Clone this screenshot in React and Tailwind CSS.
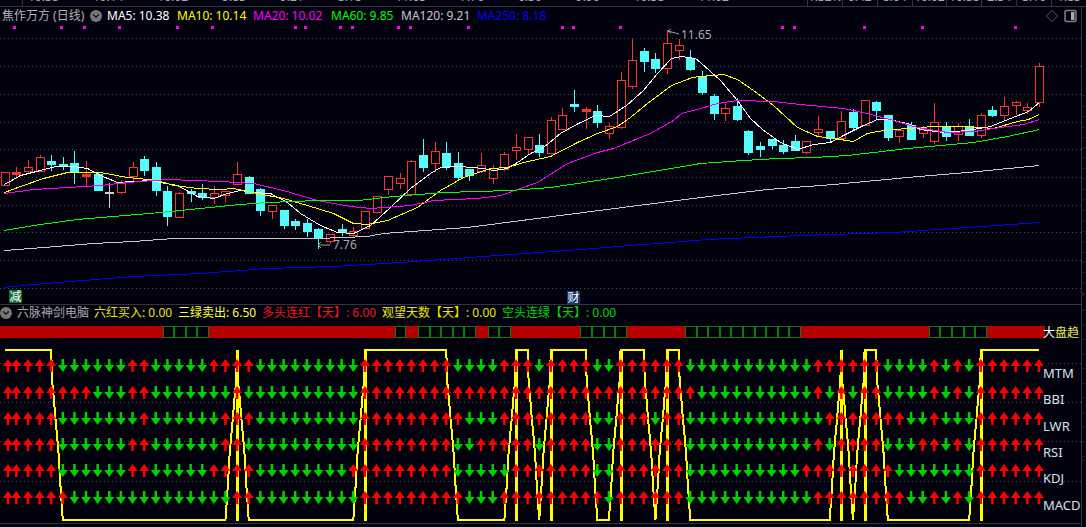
import { ChevronDown } from 'lucide-react';

const BG = '#02020e';
const RED = '#ff3232';
const CYAN = '#54fcfc';

// type, body top, body bottom, high, low (page pixels)
const candles = [
  ['r', 172, 185, 172, 185], ['R', 172, 174, 167, 178], ['r', 167, 171, 160, 173], ['r', 157, 171, 155, 171],
  ['c', 161, 164, 155, 170], ['c', 164, 165, 157, 169], ['c', 163, 172, 151, 183], ['R', 174, 176, 161, 185],
  ['c', 174, 190, 172, 190], ['w', 192, 193, 183, 207], ['r', 183, 192, 180, 193], ['r', 167, 176, 162, 180],
  ['c', 159, 170, 156, 175], ['c', 167, 190, 162, 195], ['c', 191, 216, 186, 225], ['r', 193, 217, 192, 217],
  ['c', 191, 193, 189, 201], ['c', 193, 197, 184, 199], ['r', 193, 197, 186, 203], ['r', 191, 195, 191, 201],
  ['r', 174, 184, 162, 184], ['c', 177, 193, 176, 193], ['c', 189, 210, 188, 215], ['r', 205, 211, 205, 218],
  ['c', 210, 225, 210, 228], ['c', 221, 225, 219, 229], ['c', 223, 231, 219, 236], ['c', 229, 238, 228, 248],
  ['r', 234, 241, 234, 243], ['c', 229, 232, 224, 235], ['r', 231, 235, 227, 236], ['r', 211, 228, 211, 228],
  ['r', 196, 212, 196, 212], ['r', 176, 189, 176, 194], ['r', 178, 183, 173, 188], ['r', 161, 194, 160, 194],
  ['c', 155, 167, 139, 171], ['r', 151, 163, 142, 171], ['c', 153, 166, 142, 169], ['c', 163, 177, 152, 179],
  ['c', 169, 175, 169, 180], ['r', 165, 171, 153, 172], ['r', 168, 178, 165, 183], ['r', 154, 169, 152, 170],
  ['r', 147, 150, 134, 159], ['r', 137, 149, 137, 153], ['c', 145, 152, 134, 156], ['r', 120, 153, 117, 153],
  ['r', 115, 129, 108, 129], ['c', 104, 106, 90, 111], ['R', 109, 111, 107, 128], ['c', 111, 122, 105, 127],
  ['r', 126, 133, 123, 138], ['r', 80, 127, 72, 128], ['r', 60, 86, 39, 88], ['c', 51, 61, 48, 71],
  ['c', 59, 68, 53, 72], ['r', 43, 68, 30, 73], ['r', 45, 50, 39, 59], ['c', 58, 69, 50, 70],
  ['c', 76, 92, 71, 94], ['c', 96, 113, 94, 119], ['r', 108, 113, 104, 120], ['c', 106, 119, 98, 120],
  ['c', 131, 152, 130, 154], ['c', 146, 149, 142, 156], ['c', 139, 145, 139, 148], ['c', 145, 151, 140, 153],
  ['c', 141, 150, 135, 150], ['r', 141, 152, 141, 153], ['r', 129, 132, 116, 135], ['c', 131, 138, 131, 141],
  ['r', 121, 138, 111, 138], ['c', 112, 127, 109, 129], ['r', 100, 125, 100, 125], ['c', 102, 110, 101, 118],
  ['c', 115, 137, 115, 140], ['r', 130, 136, 130, 142], ['c', 125, 139, 122, 139], ['r', 129, 133, 126, 137],
  ['r', 122, 141, 103, 143], ['c', 126, 136, 122, 140], ['r', 126, 134, 123, 140], ['c', 127, 135, 119, 135],
  ['r', 115, 135, 113, 137], ['c', 110, 115, 106, 116], ['r', 106, 115, 97, 119], ['r', 102, 105, 101, 114],
  ['r', 107, 110, 103, 113], ['r', 66, 102, 63, 106],
];

const maLines = [
  ['#ffffff', '4,184 20,175 40,170 55,166 73,166 87,168 100,175 117,182 133,181 150,180 160,182 177,185 197,196 213,198 227,193 240,190 253,192 270,193 287,202 300,213 320,225 337,232 353,233 370,225 390,207 410,188 430,173 440,167 460,166 483,168 493,170 507,168 520,160 530,153 543,147 560,133 578,123 595,115 609,116 626,105 643,90 657,73 671,58 681,56 695,58 700,62 720,80 737,100 750,118 762,129 780,142 797,149 813,144 830,142 843,135 863,125 877,119 888,119 907,123 920,129 943,132 967,130 990,126 1010,118 1028,111 1039,102'],
  ['#ffff00', '4,192 20,186 43,178 67,172 100,172 127,177 157,180 173,185 197,188 220,189 233,188 257,193 283,198 307,205 333,213 353,223 367,224 387,220 417,207 440,190 463,177 490,168 507,167 523,162 550,156 577,142 597,133 617,126 630,117 647,103 671,85 692,77 700,76 723,74 737,79 753,90 773,105 797,127 817,136 833,138 853,141 867,133 883,130 907,128 933,126 967,126 993,128 1017,121 1028,119 1039,114'],
  ['#ff00ff', '4,193 33,189 67,187 100,185 127,182 167,179 220,181 253,183 283,190 317,200 350,206 370,208 410,205 433,200 477,198 500,195 537,182 567,163 597,152 613,148 650,133 673,120 681,113 700,108 717,103 737,100 773,101 800,104 843,108 867,113 893,120 917,127 947,132 973,131 1000,127 1023,124 1039,119'],
  ['#00ff00', '4,230 33,225 77,219 113,216 160,212 200,208 240,204 267,202 317,200 358,200 393,196 443,192 510,190 550,187 617,177 700,163 743,160 777,158 813,157 847,155 873,152 907,148 940,145 973,142 1007,136 1039,129'],
  ['#c8c8c8', '4,250 43,247 93,243 133,241 173,238 317,238 367,236 383,233 467,227 583,212 700,197 767,189 833,184 907,177 967,172 1039,165'],
  ['#0000ff', '4,287 33,284 83,280 133,276 200,273 267,268 333,266 400,262 580,249 617,246 683,241 707,239 800,235 893,232 967,227 1039,222'],
];

const dots = [14, 61, 84, 119, 177, 212, 295, 305, 340, 352, 398, 410, 468, 562, 573, 620, 782, 794, 864, 922, 1015];
const mainGrid = [38, 66, 94, 122, 149, 177, 205, 232, 260, 288];
const subGrid = [363, 402, 441, 481];

// each row starts red and flips colour at these columns
const signalRows = [
  [5, 11, 13, 18, 22, 31, 39, 43, 46, 47, 51, 53, 59, 70, 76, 80, 81, 82, 83, 84],
  [8, 11, 13, 20, 21, 31, 60, 70, 71, 72, 73, 74, 76, 80, 81, 82, 83, 84],
  [5, 12, 13, 19, 22, 31, 40, 43, 51, 53, 56, 57, 59, 71, 78, 80, 81, 84],
  [5, 11, 13, 19, 21, 31, 39, 41, 46, 47, 51, 53, 59, 70, 71, 72, 76, 79, 81, 82, 83, 84],
  [5, 11, 13, 18, 22, 30, 39, 44, 51, 53, 59, 69, 77, 84],
  [6, 20, 22, 31, 40, 43, 52, 53, 59, 70, 78, 80, 81, 82, 83, 84],
];
const rowTops = [359, 386, 412, 438, 464, 491];

const highRanges = [[0, 4], [20, 20], [31, 38], [44, 45], [47, 50], [53, 55], [57, 58], [72, 72], [74, 75], [84, 89]];
const spikes = [20, 31, 44, 47, 53, 57, 72, 74, 84];
const greenCells = [[14, 17], [34, 34], [36, 40], [42, 43], [50, 53], [59, 68], [80, 84]];

const colX = (i) => 4.7 + 11.62 * i;
const isHigh = (i) => highRanges.some(([a, b]) => i >= a && i <= b);
const isGreenCell = (i) => greenCells.some(([a, b]) => i >= a && i <= b);

const stairX = [0, 0.09, 0.22, 0.36, 0.5, 0.65, 0.78, 0.91, 1];
const stairY = [0, 0.19, 0.28, 0.4, 0.5, 0.62, 0.78, 0.91, 1];

function signalPoints() {
  const top = 350;
  const bottom = 520;
  const pts = [`${colX(0)},${top}`];
  for (let i = 1; i < 90; i++) {
    const a = isHigh(i - 1);
    const b = isHigh(i);
    if (a === b) {
      pts.push(`${colX(i)},${b ? top : bottom}`);
    } else if (a) {
      stairX.forEach((f, k) => pts.push(`${colX(i - 1) + f * 11.62},${top + stairY[k] * (bottom - top)}`));
    } else {
      for (let k = 8; k >= 0; k--) {
        pts.push(`${colX(i) - stairX[k] * 11.62},${top + stairY[k] * (bottom - top)}`);
      }
    }
  }
  return pts.join(' ');
}

function Candle({ c, i }) {
  const [type, top, bottom, high, low] = c;
  const x = Math.round(colX(i));
  const color = type === 'c' ? CYAN : type === 'w' ? '#d0d0d0' : RED;
  return (
    <g shapeRendering="crispEdges">
      <rect x={x} y={high} width="1" height={low - high + 1} fill={color} />
      {type === 'r' ? (
        <rect x={x - 3.5} y={top + 0.5} width="8" height={bottom - top} fill={BG} stroke={color} />
      ) : (
        <rect x={x - 4} y={top} width="9" height={bottom - top + 1} fill={color} />
      )}
    </g>
  );
}

function MainChart() {
  return (
    <svg width="1082" height="279" viewBox="0 25 1082 279" className="block">
      {mainGrid.map((y) => (
        <line key={y} x1="0" x2="1082" y1={y + 0.5} y2={y + 0.5} stroke="#44444c" strokeDasharray="1 3" />
      ))}
      {dots.map((x) => (
        <rect key={x} x={x - 1} y="26" width="3" height="3" fill="#ff00ff" />
      ))}
      {candles.map((c, i) => (
        <Candle key={i} c={c} i={i} />
      ))}
      <g transform="translate(0.5 0.5)">
        {maLines.map(([color, pts]) => (
          <polyline key={color} points={pts} fill="none" stroke={color} strokeWidth="1" shapeRendering="crispEdges" />
        ))}
      </g>
      <path d="M668 31 L671 29 M668 31 L671 33 M668 31 L679 34" fill="none" stroke="#a0a0a0" />
      <path d="M318 245 L321 242 M318 245 L321 248 M318 245 L330 245" fill="none" stroke="#a0a0a0" />
    </svg>
  );
}

function Arrow({ x, y, up }) {
  if (up) {
    return (
      <polygon
        points={`${x},${y} ${x + 5},${y + 7} ${x + 1.25},${y + 7} ${x + 1.25},${y + 13} ${x - 1.25},${y + 13} ${x - 1.25},${y + 7} ${x - 5},${y + 7}`}
        fill="#ff0000"
      />
    );
  }
  return (
    <polygon
      points={`${x - 1.25},${y} ${x + 1.25},${y} ${x + 1.25},${y + 6} ${x + 5},${y + 6} ${x},${y + 13} ${x - 5},${y + 6} ${x - 1.25},${y + 6}`}
      fill="#00d000"
    />
  );
}

function SignalChart() {
  return (
    <svg width="1043" height="186" viewBox="0 338 1043 186" className="block shrink-0 overflow-visible">
      {subGrid.map((y) => (
        <line key={y} x1="0" x2="1082" y1={y + 0.5} y2={y + 0.5} stroke="#44444c" strokeDasharray="1 3" />
      ))}
      <polyline points={signalPoints()} fill="none" stroke="#ffff00" strokeWidth="2" shapeRendering="crispEdges" />
      {spikes.map((i) => (
        <rect key={i} x={Math.round(colX(i)) - 1} y="350" width="3" height="171" fill="#ffff00" />
      ))}
      {signalRows.map((flips, r) =>
        Array.from({ length: 90 }, (_, i) => {
          const up = flips.filter((f) => f <= i).length % 2 === 0;
          return <Arrow key={`${r}-${i}`} x={i === 0 ? 8 : colX(i)} y={rowTops[r]} up={up} />;
        }),
      )}
    </svg>
  );
}

function TopStrip() {
  const leftItems = ['10.38', '10.14', '10.02', '9.85', '9.21', '8.18', '11.65', '7.76', '6.50', '9.96', '10.58', '11.02'];
  const cells = ['1.32%', '0.42', '8.64', '10.02', '10.58', '2.34', '3.16', '1.85'];
  return (
    <div className="flex h-[7px] overflow-hidden border-b border-[#333338] text-[12px] leading-[12px] text-[#a8a8a8]">
      <div className="w-[23px] shrink-0 border-r border-[#333338]" />
      <div className="flex flex-1 gap-[34px] pl-[5px]">
        {leftItems.map((t, i) => (
          <span key={i} className="-mt-[9px]">{t}</span>
        ))}
      </div>
      <div className="flex shrink-0">
        {cells.map((t, i) => (
          <div key={i} className="w-[34.9px] border-l border-[#333338] text-center">
            <span className="-mt-[9px] block">{t}</span>
          </div>
        ))}
      </div>
    </div>
  );
}

function MainHeader() {
  return (
    <div className="flex h-[18px] items-center whitespace-nowrap pl-[2px] pr-[4px] text-[12px] leading-[18px]">
      <span className="w-[88px] shrink-0 text-[#b4b4b4]">焦作万方 (日线)</span>
      <span className="flex h-3 w-3 shrink-0 items-center justify-center rounded-full bg-[#777777]">
        <ChevronDown size={10} strokeWidth={3} color="#1a1a1a" />
      </span>
      <span className="ml-[5px] w-[70px] shrink-0 text-white">MA5: 10.38</span>
      <span className="w-[76px] shrink-0 text-[#ffff00]">MA10: 10.14</span>
      <span className="w-[78px] shrink-0 text-[#ff00ff]">MA20: 10.02</span>
      <span className="w-[70px] shrink-0 text-[#00ff00]">MA60: 9.85</span>
      <span className="w-[76px] shrink-0 text-[#c8c8c8]">MA120: 9.21</span>
      <span className="shrink-0 text-[#0000ff]">MA250: 8.18</span>
      <svg width="32" height="14" viewBox="0 0 32 14" className="ml-auto shrink-0">
        <path d="M7 1.5 L12.5 7 L7 12.5 L1.5 7 Z" fill="none" stroke="#555558" />
        <rect x="20" y="1.5" width="11" height="11" rx="2" fill="none" stroke="#808080" strokeWidth="1.5" />
        <rect x="26" y="3" width="3.5" height="8" fill="#a8a8a8" />
      </svg>
    </div>
  );
}

function SubHeader() {
  return (
    <div className="mb-[5px] flex h-[16px] items-center gap-[5px] whitespace-nowrap text-[12px] leading-[16px]">
      <span className="flex h-3 w-3 shrink-0 items-center justify-center rounded-full bg-[#777777]">
        <ChevronDown size={10} strokeWidth={3} color="#1a1a1a" />
      </span>
      <span className="w-[72px] shrink-0 text-[#a8a8a8]">六脉神剑电脑</span>
      <span className="w-[79px] shrink-0 text-[#e6e600]">六红买入: 0.00</span>
      <span className="w-[79px] shrink-0 text-[#ffff40]">三绿卖出: 6.50</span>
      <span className="w-[115px] shrink-0 text-[#f01818]">多头连红【天】: 6.00</span>
      <span className="w-[115px] shrink-0 text-[#e6e600]">观望天数【天】: 0.00</span>
      <span className="shrink-0 text-[#00d800]">空头连绿【天】: 0.00</span>
    </div>
  );
}

function TrendBar() {
  return (
    <div className="flex h-[12px] items-stretch">
      <div className="flex w-[1043px] shrink-0 overflow-visible">
        {Array.from({ length: 90 }, (_, i) => (
          <div
            key={i}
            className={
              isGreenCell(i)
                ? 'w-[11.62px] shrink-0 border border-[#0b7d0b] bg-[#02020e]'
                : 'w-[11.62px] shrink-0 bg-[#b80000]'
            }
          />
        ))}
      </div>
      <span className="relative whitespace-nowrap text-[12px] leading-[14px]">
        <span className="text-white">大</span>
        <span className="text-[#e8e860]">盘趋</span>
      </span>
    </div>
  );
}

function SignalLabels() {
  return (
    <div className="flex flex-col pt-[22px] text-[13px] leading-[14px] text-[#d8e0ec]">
      {['MTM', 'BBI', 'LWR', 'RSI', 'KDJ', 'MACD'].map((t) => (
        <span key={t} className="flex h-[26.3px] items-center">{t}</span>
      ))}
    </div>
  );
}

function AxisTicks() {
  const ticks = [];
  for (let y = 38; y < 304; y += 13.9) ticks.push(y);
  for (let y = 324; y < 524; y += 19.5) ticks.push(y);
  return (
    <svg width="4" height="520" viewBox="0 7 4 520" className="block shrink-0 border-l border-[#333338]">
      {ticks.map((y) => (
        <line key={y} x1="0" x2="4" y1={Math.round(y) + 0.5} y2={Math.round(y) + 0.5} stroke="#333338" />
      ))}
      <line x1="0" x2="4" y1="304.5" y2="304.5" stroke="#333338" />
      <line x1="0" x2="4" y1="524.5" y2="524.5" stroke="#333338" />
    </svg>
  );
}

export default function App() {
  return (
    <div className="h-[527px] w-[1086px] overflow-hidden bg-[#02020e] font-['Noto_Sans','Noto_Sans_CJK_SC',sans-serif]">
      <TopStrip />
      <div className="flex">
        <div className="relative w-[1081px] shrink-0">
          <MainHeader />
          <MainChart />
          <div className="h-[1px] bg-[#333338]" />
          <SubHeader />
          <TrendBar />
          <div className="flex h-[186px] border-b border-[#333338]">
            <SignalChart />
            <SignalLabels />
          </div>
          <span className="absolute left-[681px] top-[20px] text-[12px] leading-[16px] text-[#a8a8a8]">11.65</span>
          <span className="absolute left-[333px] top-[230px] text-[12px] leading-[16px] text-[#a8a8a8]">7.76</span>
          <span className="absolute left-[9px] top-[283px] flex h-[13px] w-[13px] items-center justify-center bg-[#0a6a2a] text-[12px] leading-[13px] text-white">减</span>
          <span className="absolute left-[567px] top-[284px] flex h-[13px] w-[13px] items-center justify-center bg-[#123a6e] text-[12px] leading-[13px] text-white">财</span>
        </div>
        <AxisTicks />
      </div>
    </div>
  );
}
